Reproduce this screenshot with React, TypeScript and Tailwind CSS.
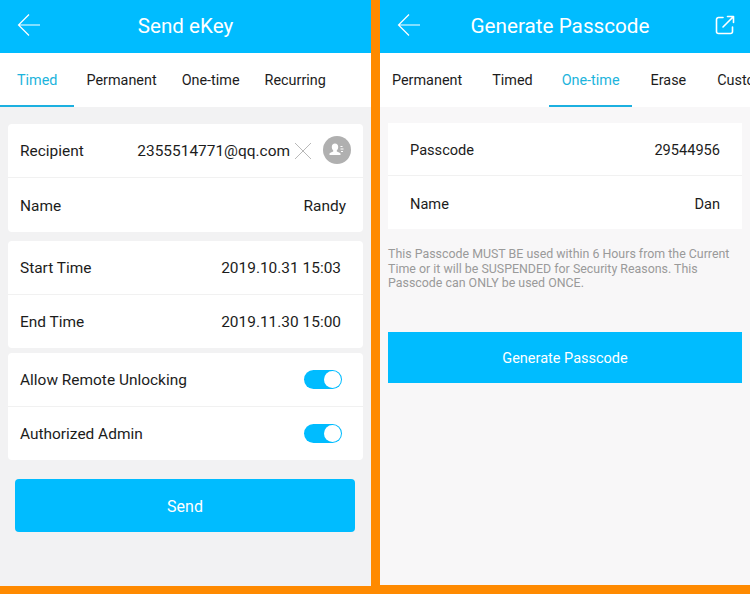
import { ReactNode } from 'react';

function BackArrow() {
  return (
    <svg width="24" height="24" viewBox="0 0 24 24" fill="none" stroke="#fff" strokeWidth="1.2">
      <path d="M23 12H1.5M12 1.5 1.5 12 12 22.5" />
    </svg>
  );
}

function ShareIcon() {
  return (
    <svg width="20" height="20" viewBox="0 0 20 20" fill="none" stroke="#fff" strokeWidth="1.6" strokeLinecap="round" strokeLinejoin="round">
      <path d="M8 2.5H3.5a2 2 0 0 0-2 2v12a2 2 0 0 0 2 2h12a2 2 0 0 0 2-2V12" />
      <path d="M8 12 18 2M12.5 1.5h6v6" />
    </svg>
  );
}

function ContactIcon() {
  return (
    <div className="-mt-px flex h-7 w-7 items-center justify-center rounded-full bg-[#b0b0b0]">
      <svg width="16" height="14" viewBox="0 0 16 14" fill="#fff">
        <path d="M6 0.5c2 0 3.2 1.5 3.2 3.4 0 1.4-.6 2.6-1.4 3.3v1.2c1.6.6 3.2 1.2 3.7 2.2V12H.5v-1.4c.5-1 2.100-1.600 3.700-2.200V7.200C3.400 6.500 2.800 5.300 2.800 3.900 2.800 2 4 .5 6 .5Z" />
        <path d="M11.500 3h2v1h-2zM11.500 5.500h3v1h-3zM12 8h2v1h-2z" />
      </svg>
    </div>
  );
}

function Toggle() {
  return (
    <div className="flex h-[19px] w-[38px] items-center justify-end rounded-full bg-[#00bcff] pr-px">
      <div className="h-[17px] w-[17px] rounded-full bg-white" />
    </div>
  );
}

function Row({ label, children, className, labelClass = '' }: { label: string; children: ReactNode; className: string; labelClass?: string }) {
  return (
    <div className={`flex items-center justify-between ${className}`}>
      <span className={labelClass}>{label}</span>
      {children}
    </div>
  );
}

function Tabs({ items, active, underline }: { items: { label: string; className: string }[]; active: string; underline: string }) {
  return (
    <div className="relative flex h-[54px] items-center overflow-hidden whitespace-nowrap bg-white pt-0.5 text-[14.4px] text-[#1c1c1c]">
      {items.map((t) => (
        <span key={t.label} className={`${t.className} ${t.label === active ? 'text-[#1cb4dc]' : ''}`}>
          {t.label}
        </span>
      ))}
      <div className={`absolute bottom-0 h-0.5 bg-[#1cb0e0] ${underline}`} />
    </div>
  );
}

function SendEKey() {
  const rowClass = 'px-3 text-[15.45px] text-[#1c1c1c]';
  return (
    <div className="flex h-[586px] w-[371px] shrink-0 flex-col bg-[#f2f2f3]">
      <div className="relative flex h-[53px] items-center justify-center bg-[#00bcff] text-[20.6px] text-white">
        <div className="absolute left-[17px] top-[13px]">
          <BackArrow />
        </div>
        <span className="pb-px">Send eKey</span>
      </div>
      <Tabs
        active="Timed"
        underline="left-0 w-[74px]"
        items={[
          { label: 'Timed', className: 'ml-[17px]' },
          { label: 'Permanent', className: 'ml-[29px]' },
          { label: 'One-time', className: 'ml-[25px]' },
          { label: 'Recurring', className: 'ml-[25px]' },
        ]}
      />
      <div className="mt-[17px] flex flex-col px-2">
        <div className="rounded-sm bg-white">
          <Row label="Recipient" labelClass="pt-0.5" className={`${rowClass} h-[54px] border-b border-[#f1f1f1]`}>
            <div className="flex items-center">
              <span className="pt-0.5">2355514771@qq.com</span>
              <svg className="ml-1 mr-[11px]" width="18" height="18" viewBox="0 0 18 18" stroke="#b8b8b8" strokeWidth="1">
                <path d="M1 1 17 17M17 1 1 17" />
              </svg>
              <ContactIcon />
            </div>
          </Row>
          <Row label="Name" labelClass="pt-1" className={`${rowClass} h-[54px] pr-[17px]`}>
            <span className="pt-1">Randy</span>
          </Row>
        </div>
        <div className="mt-[9px] rounded-sm bg-white">
          <Row label="Start Time" labelClass="pt-0.5" className={`${rowClass} h-[54px] border-b border-[#f1f1f1] pr-[22px]`}>
            <span className="pt-0.5">2019.10.31 15:03</span>
          </Row>
          <Row label="End Time" labelClass="pt-0.5" className={`${rowClass} h-[53px] pr-[22px]`}>
            <span className="pt-0.5">2019.11.30 15:00</span>
          </Row>
        </div>
        <div className="mt-[5px] rounded-sm bg-white">
          <Row label="Allow Remote Unlocking" labelClass="pt-0.5" className={`${rowClass} h-[54px] border-b border-[#f1f1f1] pr-[21px]`}>
            <Toggle />
          </Row>
          <Row label="Authorized Admin" labelClass="pt-0.5" className={`${rowClass} h-[53px] pr-[21px]`}>
            <Toggle />
          </Row>
        </div>
        <button className="ml-[7px] mr-2 mt-[19px] h-[53px] rounded bg-[#00bcff] pt-0.5 text-base text-white">Send</button>
      </div>
    </div>
  );
}

function GeneratePasscode() {
  const rowClass = 'h-[53px] pl-[22px] pr-[22px] pt-1 text-[14.6px] text-[#1c1c1c]';
  return (
    <div className="flex h-[585px] w-[370px] shrink-0 flex-col bg-[#f8f7f8]">
      <div className="relative flex h-[53px] items-center justify-center bg-[#00bcff] text-[20.7px] text-white">
        <div className="absolute left-[17px] top-[13px]">
          <BackArrow />
        </div>
        <span className="mr-2.5">Generate Passcode</span>
        <div className="absolute right-[15px] top-[15px]">
          <ShareIcon />
        </div>
      </div>
      <Tabs
        active="One-time"
        underline="left-[169px] w-[83px]"
        items={[
          { label: 'Permanent', className: 'ml-[12px]' },
          { label: 'Timed', className: 'ml-[30px]' },
          { label: 'One-time', className: 'ml-[29px]' },
          { label: 'Erase', className: 'ml-[31px]' },
          { label: 'Customized', className: 'ml-[31px]' },
        ]}
      />
      <div className="mt-4 flex flex-col px-2">
        <div className="bg-white">
          <Row label="Passcode" className={`${rowClass} border-b border-[#f1f1f1]`}>
            <span>29544956</span>
          </Row>
          <Row label="Name" className={rowClass}>
            <span>Dan</span>
          </Row>
        </div>
        <p className="mt-[18px] text-[12.4px] leading-[14.5px] text-[#9a9a9a]">
          This Passcode MUST BE used within 6 Hours from the Current Time or it will be SUSPENDED for Security Reasons. This Passcode can ONLY be used ONCE.
        </p>
        <button className="mt-[41px] h-[51px] bg-[#00bcff] pt-1 text-[14.5px] text-white">Generate Passcode</button>
      </div>
    </div>
  );
}

export default function App() {
  return (
    <div className="flex h-[594px] w-[750px] items-start justify-between overflow-hidden bg-[#ff8a00] font-['Roboto',sans-serif]">
      <SendEKey />
      <GeneratePasscode />
    </div>
  );
}
